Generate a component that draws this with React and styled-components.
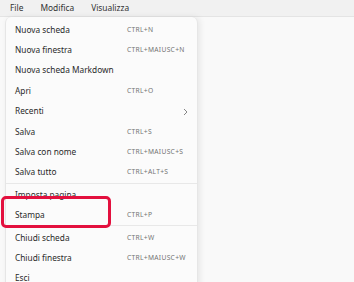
import styled, { createGlobalStyle } from "styled-components";

const Global = createGlobalStyle`
  html, body {
    margin: 0;
    padding: 0;
    background: #f9f9f9;
    font-family: "Segoe UI", "Noto Sans", sans-serif;
    overflow: hidden;
  }
`;

const Page = styled.div`
  width: 354px;
  height: 282px;
  background: #f9f9f9;
  overflow: hidden;
`;

const MenuBar = styled.div`
  height: 16px;
  display: flex;
  align-items: center;
  gap: 17px;
  padding-left: 10px;
  background: #f1f1f1;
  border-bottom: 1px solid #e4e4e4;
  font-size: 8.4px;
  color: #333;
`;

const BarItem = styled.span`
  line-height: 16px;
`;

const Menu = styled.div`
  width: 193px;
  margin-left: 5px;
  padding-top: 2px;
  background: #fbfbfb;
  border: 1px solid #e6e6e6;
  border-top: none;
  border-radius: 6px 6px 0 0;
  box-shadow: 2px 0 6px rgba(0, 0, 0, 0.08);
  height: 270px;
  box-sizing: border-box;
`;

const Row = styled.div`
  position: relative;
  height: 20.4px;
  display: flex;
  align-items: center;
  padding-left: 9px;
  font-size: 8.3px;
  color: #2a2a2a;
`;

const Label = styled.span`
  width: 112px;
  white-space: nowrap;
`;

const Shortcut = styled.span`
  font-size: 6.7px;
  letter-spacing: 0.3px;
  color: #737373;
  white-space: nowrap;
`;

const Chevron = styled.svg`
  position: absolute;
  right: 9px;
  top: 7px;
`;

const Separator = styled.div`
  height: 1px;
  margin: 0.5px 0;
  background: #e8e8e8;
`;

const Highlight = styled.div`
  position: absolute;
  left: -5px;
  top: -9px;
  width: 110px;
  height: 32px;
  box-sizing: border-box;
  border: 3px solid #e3103e;
  border-radius: 5px;
`;

const groups = [
  [
    ["Nuova scheda", "CTRL+N"],
    ["Nuova finestra", "CTRL+MAIUSC+N"],
    ["Nuova scheda Markdown", ""],
    ["Apri", "CTRL+O"],
    ["Recenti", "", true],
    ["Salva", "CTRL+S"],
    ["Salva con nome", "CTRL+MAIUSC+S"],
    ["Salva tutto", "CTRL+ALT+S"],
  ],
  [
    ["Imposta pagina", ""],
    ["Stampa", "CTRL+P"],
  ],
  [
    ["Chiudi scheda", "CTRL+W"],
    ["Chiudi finestra", "CTRL+MAIUSC+W"],
    ["Esci", ""],
  ],
];

const App = () => (
  <Page>
    <Global />
    <MenuBar>
      <BarItem>File</BarItem>
      <BarItem>Modifica</BarItem>
      <BarItem>Visualizza</BarItem>
    </MenuBar>
    <Menu>
      {groups.map((group, gi) => (
        <div key={gi}>
          {gi > 0 && <Separator />}
          {group.map(([label, keys, sub]) => (
            <Row key={label}>
              {label === "Stampa" && <Highlight />}
              <Label>{label}</Label>
              <Shortcut>{keys}</Shortcut>
              {sub && (
                <Chevron width="5" height="8" viewBox="0 0 5 8">
                  <path d="M1 1l3 3-3 3" fill="none" stroke="#777" strokeWidth="0.9" />
                </Chevron>
              )}
            </Row>
          ))}
        </div>
      ))}
    </Menu>
  </Page>
);

export default App;
